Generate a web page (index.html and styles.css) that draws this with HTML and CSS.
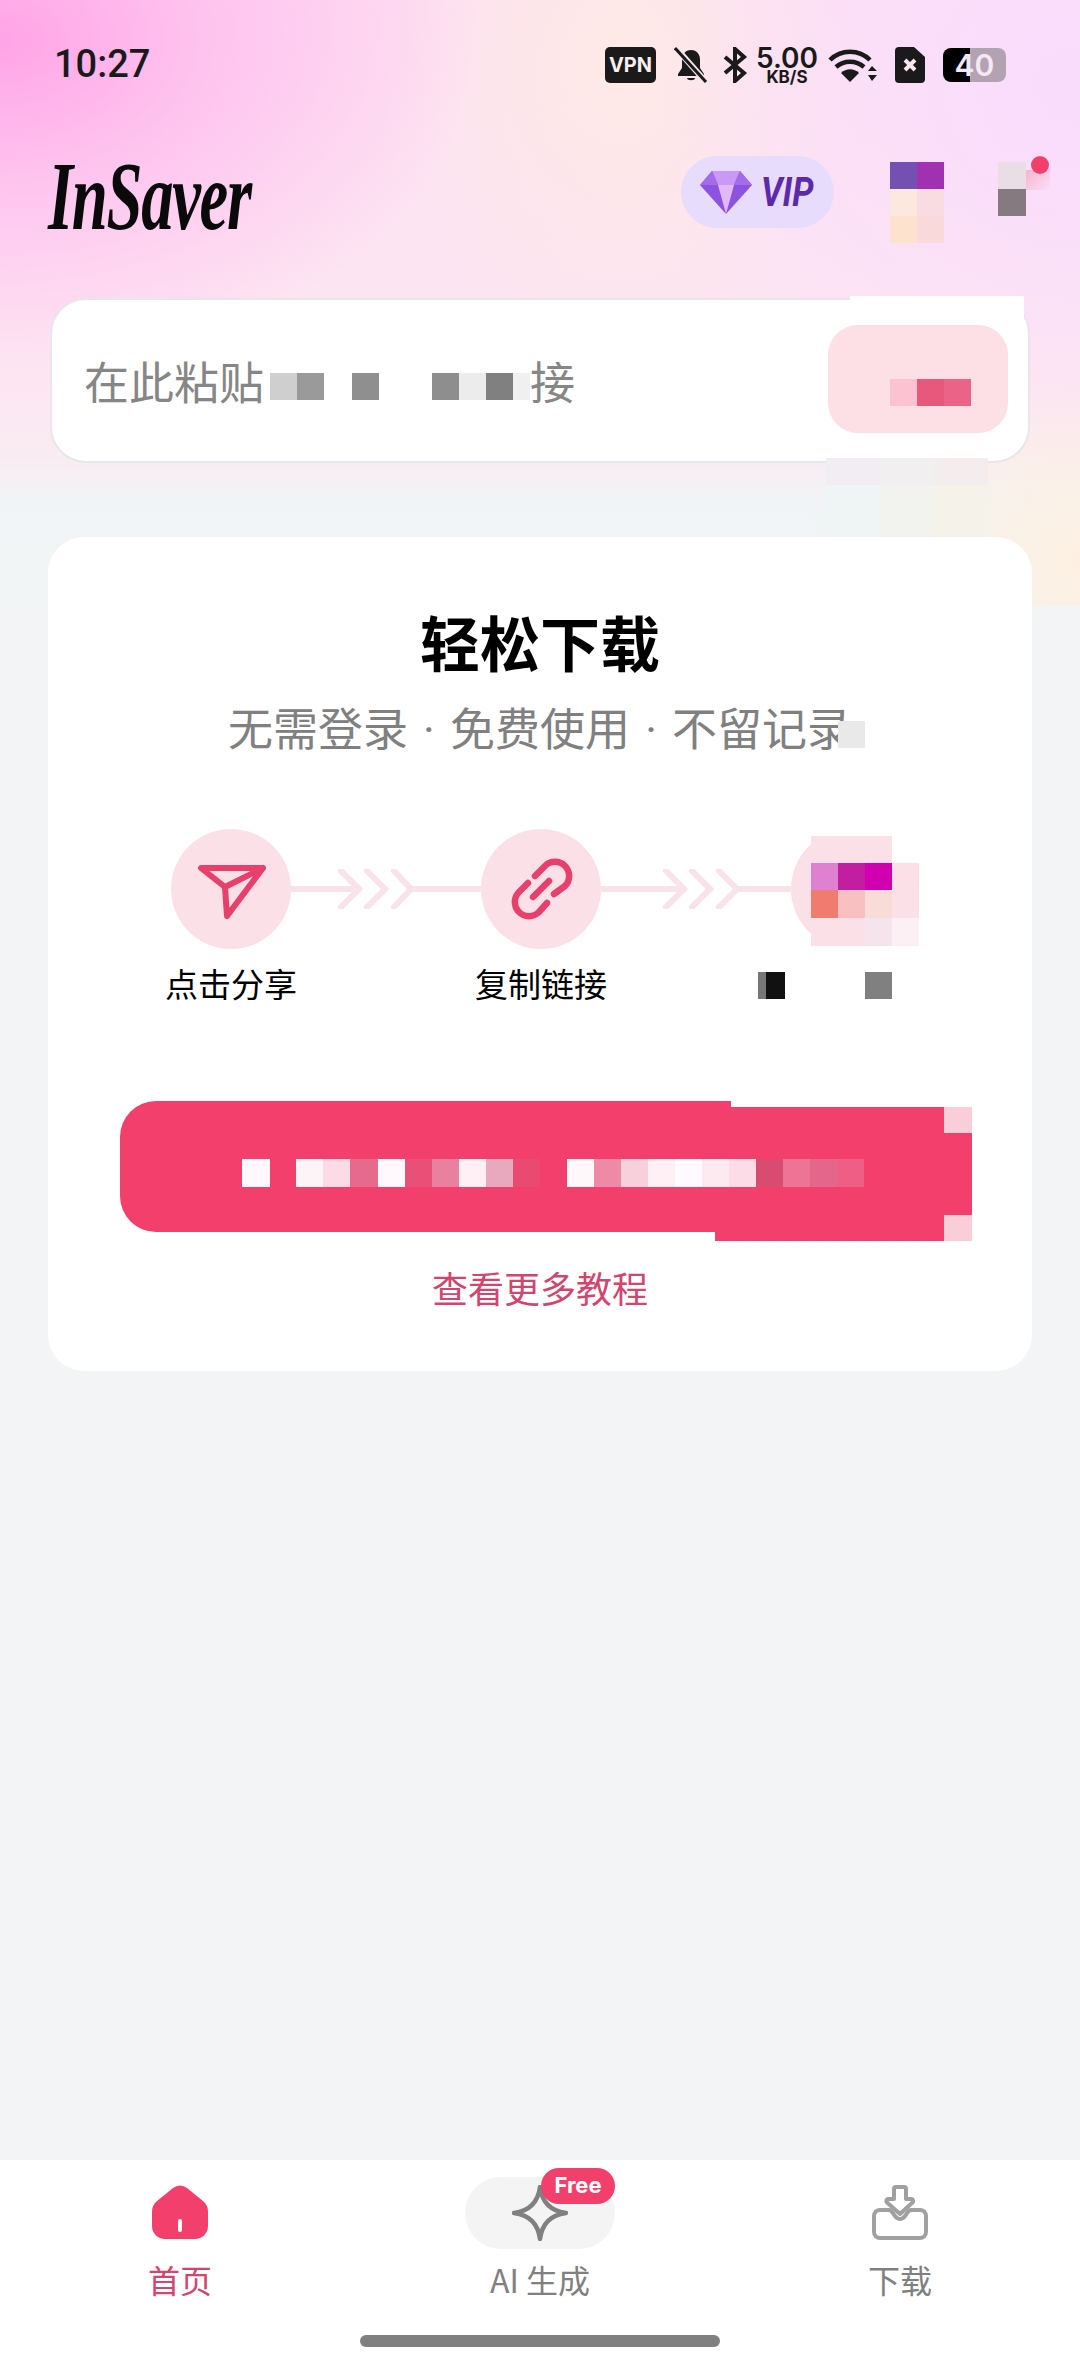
FILE: index.html
```html
<!DOCTYPE html>
<html lang="zh-CN">
<head>
<meta charset="UTF-8">
<meta name="viewport" content="width=device-width, initial-scale=1.0">
<title>InSaver</title>
<link rel="stylesheet" href="styles.css">
</head>
<body>
<div class="app">

  <!-- status bar -->
  <div class="status-bar">
    <span class="clock">10:27</span>
    <div class="status-icons">
      <span class="vpn">VPN</span>
      <svg class="ic-bell" viewBox="0 0 34 36"><path d="M17 3c-6 0-9 4.500-9 10v8l-4 6v2h26v-2l-4-6v-8c0-5.500-3-10-9-10z" fill="#1a1a1a"/><path d="M13 31h8c0 3-8 3-8 0z" fill="#1a1a1a"/><path d="M2 1l30 34" stroke="#fbe6f0" stroke-width="6"/><path d="M1 1l31 34" stroke="#1a1a1a" stroke-width="3"/></svg>
      <svg class="ic-bt" viewBox="0 0 26 36"><path d="M3 10l19 16-9 8V2l9 8L3 26" fill="none" stroke="#1a1a1a" stroke-width="4"/></svg>
      <div class="speed"><span class="speed-num">5.00</span><span class="speed-unit">KB/S</span></div>
      <svg class="ic-wifi" viewBox="0 0 50 36"><path d="M2 13c11-11 29-11 40 0M8 20c8-7 20-7 28 0" fill="none" stroke="#1a1a1a" stroke-width="4.500"/><path d="M13 26c5-5 13-5 18 0l-9 9z" fill="#1a1a1a"/><path d="M40 24l4-5 5 5zM40 28h9l-5 6z" fill="#1a1a1a"/></svg>
      <svg class="ic-sim" viewBox="0 0 30 36"><path d="M4 0h15l11 10v22a4 4 0 0 1-4 4H4a4 4 0 0 1-4-4V4a4 4 0 0 1 4-4z" fill="#1a1a1a"/><path d="M10 13l10 10M20 13L10 23" stroke="#fbe6f0" stroke-width="4"/></svg>
      <div class="battery"><span class="battery-num">40</span></div>
    </div>
  </div>

  <!-- logo row -->
  <div class="top-bar">
    <span class="logo">InSaver</span>
    <div class="top-actions">
      <div class="vip">
        <svg class="gem" viewBox="0 0 52 44">
          <path d="M12 1h28l12 14-26 29L0 15z" fill="#8c52e0"/>
          <path d="M12 1h28l-6 14H18z" fill="#c89af5"/>
          <path d="M18 15h16l-8 29z" fill="#e3b8fb"/>
          <path d="M12 1L0 15h18z" fill="#a46cea"/>
          <path d="M40 1l12 14H34z" fill="#a46cea"/>
        </svg>
        <span class="vip-text">VIP</span>
      </div>
      <svg class="blur-avatar" viewBox="0 0 54 81" shape-rendering="crispEdges">
        <rect width="27" height="27" fill="#7350b2"/><rect x="27" width="27" height="27" fill="#a032b2"/>
        <rect y="27" width="27" height="27" fill="#fce8df"/><rect x="27" y="27" width="27" height="27" fill="#f8dce2"/>
        <rect y="54" width="27" height="27" fill="#fde3cd"/><rect x="27" y="54" width="27" height="27" fill="#f9d9d9"/>
      </svg>
      <div class="bell-wrap">
        <svg class="blur-bell" viewBox="0 0 28 54" shape-rendering="crispEdges">
          <rect width="28" height="27" fill="#e9dde6"/><rect y="27" width="28" height="27" fill="#857a80"/>
        </svg>
        <span class="bell-glow"></span>
        <span class="bell-dot"></span>
      </div>
    </div>
  </div>

  <!-- paste box -->
  <div class="paste-box">
    <div class="paste-hint">
      <span>在此粘贴</span>
      <svg class="blur-hint" viewBox="0 0 270 27" shape-rendering="crispEdges">
        <rect width="27" height="27" fill="#cfcfcf"/><rect x="27" width="27" height="27" fill="#9a9a9a"/>
        <rect x="82" width="27" height="27" fill="#8f8f8f"/>
        <rect x="162" width="27" height="27" fill="#8e8e8e"/><rect x="189" width="27" height="27" fill="#ececec"/>
        <rect x="216" width="27" height="27" fill="#808080"/><rect x="243" width="17" height="27" fill="#f0f0f0"/>
      </svg>
      <span>接</span>
    </div>
    <div class="paste-btn">
      <svg class="blur-paste" viewBox="0 0 81 27" shape-rendering="crispEdges">
        <rect width="27" height="27" fill="#fcc2d2"/><rect x="27" width="27" height="27" fill="#e7587c"/><rect x="54" width="27" height="27" fill="#ea6488"/>
      </svg>
    </div>
    <span class="paste-patch-top"></span>
    <svg class="paste-patch-bottom" viewBox="0 0 162 81" shape-rendering="crispEdges">
      <rect width="54" height="27" fill="#f1edf2"/><rect x="54" width="54" height="27" fill="#f2eff0"/><rect x="108" width="54" height="27" fill="#f3eeed"/>
      <rect y="27" width="54" height="54" fill="#eff5f5"/><rect x="54" y="27" width="54" height="54" fill="#f2f3ef"/><rect x="108" y="27" width="54" height="54" fill="#f5f2ea"/>
    </svg>
  </div>

  <!-- how to card -->
  <div class="card">
    <h1 class="card-title">轻松下载</h1>
    <p class="card-sub">无需登录 · 免费使用 · 不留记录<span class="sub-blur"></span></p>

    <div class="steps">
      <div class="step">
        <div class="step-circle">
          <svg class="step-icon" viewBox="0 0 120 120"><path d="M30 39h62L56 87l-2-29zM54 58l38-19" fill="none" stroke="#e8406c" stroke-width="6" stroke-linejoin="round" stroke-linecap="round"/></svg>
        </div>
        <span class="step-label">点击分享</span>
      </div>
      <svg class="connector" viewBox="0 0 190 40"><path d="M0 20h68M120 20h70" stroke="#f9e3ea" stroke-width="6"/><path d="M50 2l18 18-18 18M76 2l18 18-18 18M103 2l17 18-17 18" fill="none" stroke="#f9e3ea" stroke-width="6" stroke-linecap="round"/></svg>
      <div class="step">
        <div class="step-circle">
          <svg class="step-icon" viewBox="0 0 120 120"><path d="M54 47l10-10a14 14 0 0 1 20 20L73 65M47 54l-9 9a14 14 0 0 0 20 20l8-9M52 68l16-16" fill="none" stroke="#e8406c" stroke-width="6.500" stroke-linecap="round" stroke-linejoin="round"/></svg>
        </div>
        <span class="step-label">复制链接</span>
      </div>
      <svg class="connector" viewBox="0 0 190 40"><path d="M0 20h83M136 20h54" stroke="#f9e3ea" stroke-width="6"/><path d="M65 2l18 18-18 18M91 2l18 18-18 18M118 2l18 18-18 18" fill="none" stroke="#f9e3ea" stroke-width="6" stroke-linecap="round"/></svg>
      <div class="step">
        <div class="step-circle step-circle-cut"></div>
        <svg class="blur-step" viewBox="0 0 108 110" shape-rendering="crispEdges">
          <rect width="81" height="27" fill="#fce0e8"/><rect x="81" width="27" height="27" fill="#fff"/>
          <rect y="27" width="27" height="27" fill="#e080d0"/><rect x="27" y="27" width="27" height="27" fill="#c21ea0"/><rect x="54" y="27" width="27" height="27" fill="#d000b0"/><rect x="81" y="27" width="27" height="27" fill="#fce0e8"/>
          <rect y="54" width="27" height="28" fill="#f07c70"/><rect x="27" y="54" width="27" height="28" fill="#f8c0c0"/><rect x="54" y="54" width="27" height="28" fill="#f8dcd8"/><rect x="81" y="54" width="27" height="28" fill="#fce0e8"/>
          <rect y="82" width="54" height="28" fill="#fce0e8"/><rect x="54" y="82" width="27" height="28" fill="#f5e4ec"/><rect x="81" y="82" width="27" height="28" fill="#fcf0f4"/>
        </svg>
        <svg class="blur-label" viewBox="0 0 134 27" shape-rendering="crispEdges">
          <rect x="0" width="8" height="27" fill="#777"/><rect x="8" width="19" height="27" fill="#111"/><rect x="107" width="27" height="27" fill="#808080"/>
        </svg>
      </div>
    </div>

    <div class="guide-btn">
      <span class="btn-patch"></span>
      <span class="btn-corner btn-corner-top"></span>
      <span class="btn-corner btn-corner-bottom"></span>
      <svg class="blur-btn" viewBox="0 0 622 28" shape-rendering="crispEdges">
        <rect x="0" width="28" height="28" fill="#fff8fc"/>
        <rect x="54" width="27" height="28" fill="#fdf4f8"/><rect x="81" width="27" height="28" fill="#fbdce6"/><rect x="108" width="28" height="28" fill="#e56a8c"/>
        <rect x="136" width="27" height="28" fill="#fff8fc"/><rect x="163" width="27" height="28" fill="#e85078"/><rect x="190" width="27" height="28" fill="#e8809e"/>
        <rect x="217" width="27" height="28" fill="#fff0f6"/><rect x="244" width="27" height="28" fill="#e8a8bd"/><rect x="271" width="27" height="28" fill="#ea4a72"/>
        <rect x="325" width="27" height="28" fill="#fff8fb"/><rect x="352" width="27" height="28" fill="#ee8aa6"/><rect x="379" width="27" height="28" fill="#f8d0dc"/>
        <rect x="406" width="27" height="28" fill="#fff0f5"/><rect x="433" width="27" height="28" fill="#fffaff"/><rect x="460" width="27" height="28" fill="#fdeaf0"/>
        <rect x="487" width="27" height="28" fill="#fcdce6"/><rect x="514" width="27" height="28" fill="#d84c72"/><rect x="541" width="27" height="28" fill="#ee7496"/>
        <rect x="568" width="27" height="28" fill="#e4668a"/><rect x="595" width="27" height="28" fill="#ef5f85"/>
      </svg>
    </div>

    <a class="more-link">查看更多教程</a>
  </div>

  <!-- bottom nav -->
  <nav class="bottom-nav">
    <div class="tabs">
      <div class="tab tab-active">
        <div class="tab-icon">
          <svg class="nav-svg" viewBox="0 0 56 56"><path d="M21 3L5 16Q0 20 0 27V41A13 13 0 0 0 13 54H43A13 13 0 0 0 56 41V27Q56 20 51 16L35 3Q28-2 21 3z" fill="#f23f6c"/><path d="M28 36v9" stroke="#fff" stroke-width="4" stroke-linecap="round"/></svg>
        </div>
        <span>首页</span>
      </div>
      <div class="tab">
        <div class="tab-icon tab-pill">
          <svg class="nav-svg" viewBox="0 0 56 56"><path d="M28 2Q31 25 54 28 31 31 28 54 25 31 2 28 25 25 28 2z" fill="none" stroke="#808080" stroke-width="4.500" stroke-linejoin="round"/></svg>
          <span class="free-badge">Free</span>
        </div>
        <span>AI 生成</span>
      </div>
      <div class="tab">
        <div class="tab-icon">
          <svg class="nav-svg" viewBox="0 0 56 56"><path d="M17 25H8a6 6 0 0 0-6 6V47a6 6 0 0 0 6 6H48a6 6 0 0 0 6-6V31a6 6 0 0 0-6-6H39c-3 0-4 4-6 6-3 4-7 4-10 0-2-2-3-6-6-6z" fill="none" stroke="#a0a0a0" stroke-width="4"/><path d="M22 14V4a2 2 0 0 1 2-2h8a2 2 0 0 1 2 2V14h5a2 2 0 0 1 1.500 3.500L28 29 15 17.500a2 2 0 0 1 1.500-3.500z" fill="none" stroke="#a0a0a0" stroke-width="4" stroke-linejoin="round"/></svg>
        </div>
        <span>下载</span>
      </div>
    </div>
    <div class="home-bar"></div>
  </nav>

</div>
</body>
</html>
```
FILE: styles.css
```css
/* page */
* {
  box-sizing: border-box;
}

body {
  margin: 0;
  font-family: "Noto Sans CJK SC", "Noto Sans", Roboto, sans-serif;
}

.app {
  width: 1080px;
  height: 2376px;
  display: flex;
  flex-direction: column;
  overflow: hidden;
  background-color: #f3f4f6;
  background-image:
    radial-gradient(ellipse 480px 330px at 0 40px, #ffa4e6 0%, rgba(255, 185, 238, 0.7) 45%, rgba(255, 200, 242, 0) 100%),
    radial-gradient(ellipse 420px 380px at 1080px 90px, #f9dcfd 0%, rgba(249, 220, 253, 0) 100%),
    radial-gradient(ellipse 240px 300px at 620px 60px, #feeae6 0%, rgba(254, 234, 230, 0) 100%),
    radial-gradient(ellipse 280px 220px at 1080px 560px, #fdf0e2 0%, rgba(253, 240, 226, 0) 100%),
    linear-gradient(180deg, #fde0f2 0, #fde6f2 380px, #f9ebf2 450px, #f0f4f6 505px, #f1f5f5 605px);
  background-size: 100% 606px;
  background-repeat: no-repeat;
}

/* status bar */
.status-bar {
  height: 126px;
  padding: 46px 74px 0 54px;
  display: flex;
  justify-content: space-between;
  align-items: flex-start;
  color: #1a1a1a;
}

.clock {
  font-family: Roboto, sans-serif;
  font-size: 38px;
  font-weight: 500;
  line-height: 36px;
}

.status-icons {
  display: flex;
  align-items: center;
  height: 38px;
}

.vpn {
  width: 51px;
  height: 36px;
  margin-right: 18px;
  border-radius: 5px;
  background: #1a1a1a;
  color: #fbeef0;
  font-family: Inter, sans-serif;
  font-size: 20px;
  font-weight: 700;
  line-height: 36px;
  text-align: center;
}

.ic-bell {
  width: 34px;
  height: 36px;
  margin-right: 14px;
}

.ic-bt {
  width: 26px;
  height: 36px;
  margin-right: 10px;
}

.speed {
  width: 58px;
  margin-right: 12px;
  display: flex;
  flex-direction: column;
  align-items: center;
  font-family: Inter, sans-serif;
}

.speed-num {
  font-size: 28px;
  font-weight: 600;
  line-height: 25px;
}

.speed-unit {
  font-size: 17px;
  font-weight: 700;
  line-height: 13px;
}

.ic-wifi {
  width: 50px;
  height: 36px;
  margin-right: 17px;
}

.ic-sim {
  width: 30px;
  height: 36px;
  margin-right: 18px;
}

.battery {
  width: 63px;
  height: 34px;
  border-radius: 8px;
  background: linear-gradient(90deg, #000 0, #000 27px, #b3a2b2 27px);
  color: #f6e7f4;
  font-family: Inter, sans-serif;
  font-size: 30px;
  font-weight: 600;
  line-height: 34px;
  text-align: center;
}

/* logo row */
.top-bar {
  height: 172px;
  padding: 30px 30px 0 48px;
  display: flex;
  justify-content: space-between;
  align-items: flex-start;
}

.logo {
  display: inline-block;
  font-family: "Liberation Serif", serif;
  font-size: 98px;
  font-style: italic;
  font-weight: 700;
  line-height: 80px;
  letter-spacing: -2px;
  color: #0a0a0a;
  transform: scaleX(0.66);
  transform-origin: left center;
}

.top-actions {
  display: flex;
  align-items: flex-start;
}

.vip {
  width: 153px;
  height: 72px;
  margin-right: 56px;
  padding-left: 19px;
  display: flex;
  align-items: center;
  gap: 9px;
  border-radius: 36px;
  background: #e8dcfc;
}

.gem {
  width: 52px;
  height: 44px;
}

.vip-text {
  font-family: Roboto, sans-serif;
  font-size: 40px;
  font-style: italic;
  font-weight: 700;
  color: #5c2aa8;
  display: inline-block;
  transform: scaleX(0.85);
  transform-origin: left center;
}

.blur-avatar {
  width: 54px;
  height: 81px;
  margin-top: 6px;
  margin-right: 54px;
}

.bell-wrap {
  position: relative;
  width: 52px;
  height: 81px;
}

.blur-bell {
  position: absolute;
  left: 0;
  top: 6px;
  width: 28px;
  height: 54px;
}

.bell-glow {
  position: absolute;
  left: 28px;
  top: 14px;
  width: 24px;
  height: 20px;
  background: linear-gradient(135deg, #f7b6c8, rgba(247, 182, 200, 0));
}

.bell-dot {
  position: absolute;
  left: 33px;
  top: 0;
  width: 18px;
  height: 18px;
  border-radius: 50%;
  background: #f23f6c;
}

/* paste box */
.paste-box {
  position: relative;
  width: 980px;
  height: 165px;
  margin-left: 50px;
  padding: 0 20px 0 32px;
  display: flex;
  align-items: center;
  justify-content: space-between;
  background: #fff;
  border: 2px solid #e8e6ea;
  border-radius: 36px;
}

.paste-hint {
  display: flex;
  align-items: center;
  font-size: 45px;
  line-height: 60px;
  color: #868686;
}

.blur-hint {
  width: 270px;
  height: 27px;
  margin-top: 12px;
  margin-left: 6px;
  margin-right: -10px;
}

.paste-btn {
  width: 180px;
  height: 108px;
  margin-top: -4px;
  padding: 54px 0 0 62px;
  border-radius: 30px;
  background: #fddfe6;
}

.blur-paste {
  display: block;
  width: 81px;
  height: 27px;
}

.paste-patch-top {
  position: absolute;
  right: 4px;
  top: -4px;
  width: 174px;
  height: 28px;
  background: #fff;
}

.paste-patch-bottom {
  position: absolute;
  right: 40px;
  top: 158px;
  width: 162px;
  height: 81px;
}

/* how to card */
.card {
  position: relative;
  width: 984px;
  height: 834px;
  margin: 74px 0 0 48px;
  padding-top: 68px;
  background: #fff;
  border-radius: 36px;
  text-align: center;
}

.card-title {
  margin: 0;
  font-size: 60px;
  font-weight: 700;
  line-height: 72px;
  color: #000;
}

.card-sub {
  position: relative;
  margin: 24px 0 0;
  font-family: Roboto, "Noto Sans CJK SC", sans-serif;
  font-size: 45px;
  word-spacing: 4px;
  line-height: 60px;
  color: #808080;
}

.sub-blur {
  position: absolute;
  left: 790px;
  top: 20px;
  width: 27px;
  height: 27px;
  background: #e9e9e9;
}

.steps {
  position: relative;
  margin-top: 68px;
  padding-left: 123px;
  display: flex;
  align-items: flex-start;
}

.step {
  position: relative;
  width: 120px;
  display: flex;
  flex-direction: column;
  align-items: center;
}

.step-circle {
  width: 120px;
  height: 120px;
  border-radius: 50%;
  background: #fce0e8;
}

.step-circle-cut {
  clip-path: inset(7px 0 3px 0);
}

.step-icon {
  display: block;
  width: 120px;
  height: 120px;
}

.step-label {
  margin-top: 11px;
  font-size: 33px;
  line-height: 46px;
  color: #000;
  white-space: nowrap;
}

.connector {
  flex: none;
  width: 190px;
  height: 40px;
  margin-top: 40px;
}

.blur-step {
  position: absolute;
  left: 20px;
  top: 7px;
  width: 108px;
  height: 110px;
}

.blur-label {
  position: absolute;
  left: -33px;
  top: 143px;
  width: 134px;
  height: 27px;
}

.guide-btn {
  position: relative;
  width: 611px;
  height: 131px;
  margin: 95px 0 0 72px;
  padding: 58px 0 0 122px;
  background: #f23f6c;
  border-radius: 36px 0 0 36px;
}

.blur-btn {
  position: relative;
  display: block;
  width: 622px;
  height: 28px;
}

.btn-patch {
  position: absolute;
  left: 595px;
  top: 6px;
  width: 257px;
  height: 134px;
  background: #f23f6c;
}

.btn-corner {
  position: absolute;
  left: 824px;
  width: 28px;
  height: 26px;
  background: #f9ced9;
}

.btn-corner-top {
  top: 6px;
}

.btn-corner-bottom {
  top: 114px;
}

.more-link {
  display: block;
  margin-top: 30px;
  font-size: 36px;
  line-height: 50px;
  color: #d0466e;
}

/* bottom nav */
.bottom-nav {
  margin-top: auto;
  height: 216px;
  padding-top: 17px;
  background: #fff;
}

.tabs {
  display: flex;
}

.tab {
  width: 360px;
  display: flex;
  flex-direction: column;
  align-items: center;
  font-size: 32px;
  line-height: 44px;
  color: #808080;
}

.tab-active {
  color: #d0466e;
}

.tab-icon {
  position: relative;
  width: 150px;
  height: 72px;
  margin-bottom: 8px;
  display: flex;
  align-items: center;
  justify-content: center;
}

.tab-pill {
  background: #f4f4f4;
  border-radius: 36px;
}

.nav-svg {
  width: 56px;
  height: 56px;
}

.free-badge {
  position: absolute;
  right: 0;
  top: -9px;
  width: 74px;
  height: 36px;
  border-radius: 18px;
  background: #f23f6c;
  color: #fff;
  font-family: Inter, sans-serif;
  font-size: 22px;
  font-weight: 700;
  line-height: 35px;
  text-align: center;
}

.home-bar {
  width: 360px;
  height: 12px;
  margin: 34px auto 0;
  border-radius: 6px;
  background: #808080;
}
```
